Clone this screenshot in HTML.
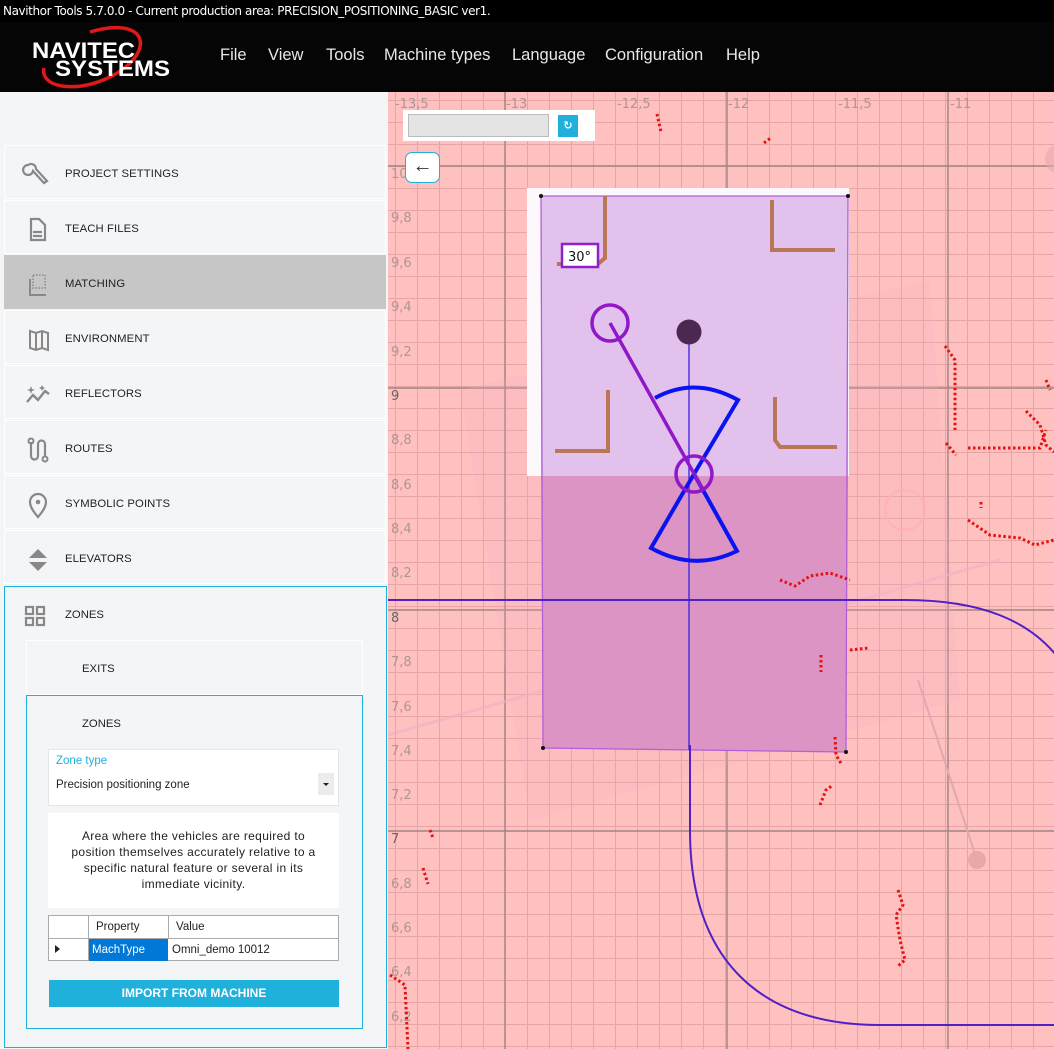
<!DOCTYPE html>
<html><head><meta charset="utf-8">
<style>
*{margin:0;padding:0;box-sizing:border-box}
body{width:1054px;height:1049px;overflow:hidden;background:#f4f5f7;font-family:"Liberation Sans","DejaVu Sans",sans-serif;position:relative}
.title{position:absolute;left:0;top:0;width:1054px;height:22px;background:#000;color:#fff;font-size:12px;line-height:22px;padding-left:3px;font-family:"DejaVu Sans","Liberation Sans",sans-serif;letter-spacing:-0.4px}
.nav{position:absolute;left:0;top:22px;width:1054px;height:70px;background:#050505}
.menu{position:absolute;top:22px;height:70px;line-height:66px;color:#e8e8e8;font-size:16.5px;font-family:"Liberation Sans",sans-serif}
.side{position:absolute;left:0;top:92px;width:388px;height:957px;background:#f4f5f7}
.item{position:absolute;left:4px;width:382px;height:54px;border:1px solid #fff;background:#f4f5f7;font-size:11.3px;color:#222;letter-spacing:0.1px}
.item span{position:absolute;left:60px;top:22px}
.item svg{position:absolute;left:17px;top:15px}
.sel{background:#c6c6c6;border-color:#c6c6c6}
.map{position:absolute;left:388px;top:92px}
</style></head><body>
<div class="title">Navithor Tools 5.7.0.0 - Current production area: PRECISION_POSITIONING_BASIC ver1.</div>
<div class="nav">
<svg width="200" height="70" style="position:absolute;left:0;top:0">
<path d="M90 10 C130 -2 150 12 136 34 C124 52 90 68 62 64 C48 62 42 54 44 46" fill="none" stroke="#e01818" stroke-width="3.5"/>
<text x="32" y="36" fill="#fff" font-family="Liberation Sans" font-weight="bold" font-size="22" textLength="103" lengthAdjust="spacingAndGlyphs">NAVITEC</text>
<text x="55" y="54" fill="#fff" font-family="Liberation Sans" font-weight="bold" font-size="22" textLength="115" lengthAdjust="spacingAndGlyphs">SYSTEMS</text>
</svg>
</div>
<div class="menu" style="left:220px">File</div>
<div class="menu" style="left:268px">View</div>
<div class="menu" style="left:326px">Tools</div>
<div class="menu" style="left:384px">Machine types</div>
<div class="menu" style="left:512px">Language</div>
<div class="menu" style="left:605px">Configuration</div>
<div class="menu" style="left:726px">Help</div>

<div class="side"></div>
<div class="item" style="top:145px"><svg width="30" height="28" viewBox="0 0 30 28"><path d="M6 4 a5 5 0 1 0 5 6 L22 22 l3 -2 L14 8 a5 5 0 0 0 -8 -4z" fill="none" stroke="#888" stroke-width="2.2"/></svg><span>PROJECT SETTINGS</span></div>
<div class="item" style="top:200px"><svg width="30" height="28"><path d="M9 3 h8 l6 6 v15 h-14z M11 16 h9 M11 20 h9" fill="none" stroke="#888" stroke-width="2.2"/></svg><span>TEACH FILES</span></div>
<div class="item sel" style="top:255px"><svg width="30" height="28"><path d="M8 8 v16 h16" fill="none" stroke="#888" stroke-width="2"/><rect x="11" y="4" width="12" height="13" fill="none" stroke="#888" stroke-width="1.5" stroke-dasharray="1.5 1.5"/></svg><span>MATCHING</span></div>
<div class="item" style="top:310px"><svg width="30" height="28"><path d="M8 5 l6 2 l6 -2 l6 2 v17 l-6 -2 l-6 2 l-6 -2z M14 7 v17 M20 5 v17" fill="none" stroke="#888" stroke-width="2"/></svg><span>ENVIRONMENT</span></div>
<div class="item" style="top:365px"><svg width="30" height="28"><path d="M5 21 l6 -7 l5 5 l7 -9 l4 3" fill="none" stroke="#888" stroke-width="2.4"/><path d="M8 8 l1 -3 l1 3 l3 1 l-3 1 l-1 3 l-1 -3 l-3 -1z M20 4 l1 2 l2 1 l-2 1 l-1 2 l-1 -2 l-2 -1 l2 -1z" fill="#888"/></svg><span>REFLECTORS</span></div>
<div class="item" style="top:420px"><svg width="30" height="28"><path d="M9 6 v14 a3.5 3.5 0 0 0 7 0 v-12 a3.5 3.5 0 0 1 7 0 v12" fill="none" stroke="#888" stroke-width="2.2"/><circle cx="9" cy="5" r="2.5" fill="none" stroke="#888" stroke-width="2"/><circle cx="23" cy="23" r="2.5" fill="none" stroke="#888" stroke-width="2"/></svg><span>ROUTES</span></div>
<div class="item" style="top:475px"><svg width="30" height="28"><path d="M16 26 C10 19 8 15 8 11 a8 8 0 0 1 16 0 c0 4 -2 8 -8 15z" fill="none" stroke="#888" stroke-width="2.2"/><circle cx="16" cy="11" r="2.3" fill="#888"/></svg><span>SYMBOLIC POINTS</span></div>
<div class="item" style="top:530px"><svg width="30" height="28"><path d="M7 12 l9 -9 l9 9z M7 16 l9 9 l9 -9z" fill="#888"/></svg><span>ELEVATORS</span></div>

<div style="position:absolute;left:4px;top:586px;width:383px;height:462px;border:1px solid #1fb0dc;background:#f4f5f7">
 <svg width="22" height="22" style="position:absolute;left:19px;top:18px"><g fill="none" stroke="#888" stroke-width="2.2"><rect x="2" y="2" width="7" height="7"/><rect x="13" y="2" width="7" height="7"/><rect x="2" y="13" width="7" height="7"/><rect x="13" y="13" width="7" height="7"/></g></svg>
 <div style="position:absolute;left:60px;top:22px;font-size:11.3px;color:#222">ZONES</div>
 <div style="position:absolute;left:21px;top:53px;width:337px;height:55px;border:1px solid #fff"><div style="position:absolute;left:55px;top:22px;font-size:11.3px;color:#222">EXITS</div></div>
 <div style="position:absolute;left:21px;top:108px;width:337px;height:334px;border:1px solid #1fb0dc">
  <div style="position:absolute;left:55px;top:22px;font-size:11.3px;color:#222">ZONES</div>
  <div style="position:absolute;left:21px;top:53px;width:291px;height:57px;background:#fff;border:1px solid #e6e6e6">
   <div style="position:absolute;left:7px;top:5px;font-size:11.5px;color:#1fb0dc">Zone type</div>
   <div style="position:absolute;left:7px;top:29px;font-size:11.5px;color:#222">Precision positioning zone</div>
   <div style="position:absolute;left:269px;top:23px;width:16px;height:22px;background:#ececec"><div style="position:absolute;left:5px;top:10px;border-left:3px solid transparent;border-right:3px solid transparent;border-top:3px solid #222"></div></div>
  </div>
  <div style="position:absolute;left:21px;top:117px;width:291px;height:95px;background:#fff;font-size:12px;letter-spacing:0.35px;color:#222;text-align:center;line-height:16px;padding:15px 18px 0">Area where the vehicles are required to position themselves accurately relative to a specific natural feature or several in its immediate vicinity.</div>
  <div style="position:absolute;left:21px;top:219px;width:291px;height:46px;border:1px solid #aaa;background:#fff;font-size:11.5px;color:#222">
   <div style="position:absolute;left:39px;top:0;width:1px;height:45px;background:#aaa"></div>
   <div style="position:absolute;left:119px;top:0;width:1px;height:23px;background:#aaa"></div>
   <div style="position:absolute;left:0;top:22px;width:290px;height:1px;background:#aaa"></div>
   <div style="position:absolute;left:47px;top:5px">Property</div>
   <div style="position:absolute;left:127px;top:5px">Value</div>
   <div style="position:absolute;left:6px;top:29px;border-top:4px solid transparent;border-bottom:4px solid transparent;border-left:5px solid #222"></div>
   <div style="position:absolute;left:40px;top:23px;width:79px;height:22px;background:#0078d7;color:#fff;padding:5px 0 0 3px">MachType</div>
   <div style="position:absolute;left:123px;top:28px">Omni_demo 10012</div>
  </div>
  <div style="position:absolute;left:22px;top:284px;width:290px;height:27px;background:#1fb0dc;color:#fff;font-weight:bold;font-size:12px;text-align:center;line-height:27px">IMPORT FROM MACHINE</div>
 </div>
</div>

<svg class="map" width="666" height="957" viewBox="388 92 666 957">
<defs>
<pattern id="mg" patternUnits="userSpaceOnUse" x="505" y="166" width="22" height="22"><path d="M0.5 0 V22 M0 0.5 H22" stroke="#e6a4a4" stroke-width="1" fill="none"/></pattern>
</defs>
<rect x="388" y="92" width="666" height="957" fill="#ffc0c0"/>
<rect x="388" y="92" width="666" height="957" fill="url(#mg)"/>
<g stroke="#a08484" stroke-width="1.4">
<line x1="505" y1="92" x2="505" y2="1049"/><line x1="727" y1="92" x2="727" y2="1049"/><line x1="948" y1="92" x2="948" y2="1049"/>
<line x1="388" y1="166" x2="1054" y2="166"/><line x1="388" y1="388" x2="1054" y2="388"/><line x1="388" y1="610" x2="1054" y2="610"/><line x1="388" y1="831" x2="1054" y2="831"/>
</g>
<g font-family="DejaVu Sans" font-size="13" fill="#b09494">
<text x="395" y="108">-13,5</text><text x="506" y="108">-13</text><text x="617" y="108">-12,5</text><text x="728" y="108">-12</text><text x="838" y="108">-11,5</text><text x="950" y="108">-11</text>
<text x="391" y="222">9,8</text><text x="391" y="267">9,6</text><text x="391" y="311">9,4</text><text x="391" y="356">9,2</text><text x="391" y="400" fill="#666">9</text>
<text x="391" y="444">8,8</text><text x="391" y="489">8,6</text><text x="391" y="533">8,4</text><text x="391" y="577">8,2</text><text x="391" y="622" fill="#666">8</text>
<text x="391" y="666">7,8</text><text x="391" y="711">7,6</text><text x="391" y="755">7,4</text><text x="391" y="799">7,2</text><text x="391" y="843" fill="#666">7</text>
<text x="391" y="888">6,8</text><text x="391" y="932">6,6</text><text x="391" y="976">6,4</text><text x="391" y="1021">6,2</text><text x="391" y="178">10</text>
</g>
<path d="M460 390 L930 280 L960 700 L530 820z" fill="#f4b4c0" opacity="0.18"/>
<line x1="388" y1="735" x2="1000" y2="560" stroke="#f0b0c8" stroke-width="3" opacity="0.6"/>
<circle cx="1060" cy="159" r="15" fill="#e8a8a8" opacity="0.6"/>
<circle cx="977" cy="860" r="9" fill="#e8a8a8"/>
<line x1="918" y1="680" x2="977" y2="860" stroke="#e0a8b0" stroke-width="2"/>
<circle cx="905" cy="510" r="20" fill="none" stroke="#ffb0b0" stroke-width="3" opacity="0.7"/>
<rect x="527" y="188" width="322" height="288" fill="#fcf8fc"/>
<path d="M541 196 L848 196 L848 476 L541 476z" fill="#e2c2ec"/>
<path d="M541 476 L848 476 L846 752 L543 748z" fill="#dc94c4"/>
<path d="M541 196 L848 196 L846 752 L543 748z" fill="none" stroke="#b060d8" stroke-width="1.3"/>
<g fill="#111"><circle cx="541" cy="196" r="2"/><circle cx="848" cy="196" r="2"/><circle cx="543" cy="748" r="2"/><circle cx="846" cy="752" r="2"/></g>
<g fill="none" stroke="#b87858" stroke-width="4">
<path d="M605 196 V258 L598 264 H557"/>
<path d="M772 200 V250 H835"/>
<path d="M608 390 V451 H555"/>
<path d="M775 397 V440 L780 447 H837"/>
</g>
<rect x="562" y="244" width="36" height="23" fill="#fff" stroke="#9020c8" stroke-width="2.5"/>
<text x="568" y="261" font-family="DejaVu Sans" font-size="13" fill="#111">30°</text>
<g fill="none" stroke="#5020c8" stroke-width="2">
<path d="M388 600 H905 C980 600 1030 620 1060 660"/>
<path d="M690 745 V830 C690 960 760 1025 880 1025 H1054"/>
</g>
<line x1="689" y1="332" x2="689" y2="750" stroke="#3a20e0" stroke-width="1.3"/>
<circle cx="689" cy="332" r="12.5" fill="#4a2850"/>
<g fill="none" stroke="#0a14f0" stroke-width="4">
<path d="M655 398 Q695 376 738 400 L694 474 L651 548 Q694 572 737 551 L694 474"/>
</g>
<line x1="610" y1="323" x2="702" y2="488" stroke="#9018c8" stroke-width="3.5"/>
<circle cx="610" cy="323" r="18" fill="none" stroke="#9018c8" stroke-width="3.5"/>
<circle cx="694" cy="474" r="18" fill="none" stroke="#9018c8" stroke-width="3.5"/>
<g fill="none" stroke="#e81010" stroke-width="3" stroke-dasharray="2.5 2.5">
<path d="M657 114 L661 132"/><path d="M764 143 L772 137"/>
<path d="M945 346 L955 360 V430"/><path d="M946 443 L956 455"/><path d="M968 448 H1040 L1046 430"/>
<path d="M1026 411 L1040 425 L1046 445 L1054 452"/><path d="M1046 380 L1050 390"/>
<path d="M981 502 V508"/><path d="M968 520 L990 535 L1020 538 L1035 545 L1054 540"/>
<path d="M780 580 L795 586 L810 576 L830 573 L850 580"/>
<path d="M821 655 V672"/><path d="M850 650 L868 648"/>
<path d="M835 737 L836 755 L842 765"/><path d="M820 805 L826 790 L833 785"/>
<path d="M898 890 L903 905 L896 915 L900 940 L905 960 L898 966"/>
<path d="M430 830 L433 838"/><path d="M423 868 L428 884"/>
<path d="M390 975 L405 985 L408 1049"/>
</g>
</svg>
<div style="position:absolute;left:403px;top:110px;width:192px;height:31px;background:#fff">
 <div style="position:absolute;left:5px;top:4px;width:141px;height:23px;background:#e4e4e4;border:1px solid #bbb"></div>
 <div style="position:absolute;left:155px;top:5px;width:20px;height:22px;background:#1fb0dc;color:#fff;font-size:11px;font-weight:bold;text-align:center;line-height:22px">↻</div>
</div>
<div style="position:absolute;left:405px;top:152px;width:35px;height:31px;background:#fff;border:1px solid #1fb0dc;border-radius:7px;font-size:20px;text-align:center;line-height:27px;color:#333">←</div>
</body></html>
